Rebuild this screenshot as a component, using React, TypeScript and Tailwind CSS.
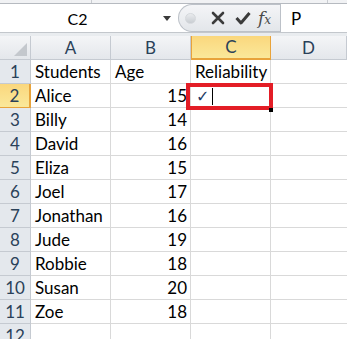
import React from "react";

const rows: [string, string][] = [
  ["Students", "Age"],
  ["Alice", "15"],
  ["Billy", "14"],
  ["David", "16"],
  ["Eliza", "15"],
  ["Joel", "17"],
  ["Jonathan", "16"],
  ["Jude", "19"],
  ["Robbie", "18"],
  ["Susan", "20"],
  ["Zoe", "18"],
  ["", ""],
];

const font = { fontFamily: "Lato, 'Open Sans', sans-serif" };

export default function App() {
  return (
    <div className="relative w-[347px] h-[339px] overflow-hidden bg-white" style={font}>
      {/* top strip */}
      <div className="h-[4px] bg-[#f1f2f4] border-b border-[#b6bac0] flex">
        <div className="w-[92px] border-r border-[#c9ccd1]" />
        <div className="w-[236px] border-r border-[#c9ccd1]" />
      </div>
      {/* formula bar */}
      <div className="h-[29px] flex bg-white border-b border-[#c3c7cc]">
        <div className="w-[178px] flex items-center relative">
          <div className="w-[155px] text-center text-[16px] text-black leading-none pt-[1px]">C2</div>
          <div className="absolute left-[163px] top-[12px] w-0 h-0 border-l-[4px] border-r-[4px] border-t-[5px] border-l-transparent border-r-transparent border-t-[#3a3a3a]" />
        </div>
        <div className="w-[102px] h-full flex items-center rounded-l-[14px] border border-r-0 border-[#bcc1c8] bg-gradient-to-b from-[#f4f5f7] to-[#e3e6ea]">
          <div className="ml-[6px] w-[11px] h-[11px] rounded-full bg-gradient-to-b from-[#e9ebee] to-[#c9cdd2] border border-[#d5d8dc]" />
          <svg className="ml-[15px]" width="14" height="14" viewBox="0 0 14 14">
            <path d="M2 2 L12 12 M12 2 L2 12" stroke="#3b3b3b" strokeWidth="2.6" strokeLinecap="round" />
          </svg>
          <svg className="ml-[10px]" width="16" height="14" viewBox="0 0 16 14">
            <path d="M1.5 7 L6 12 L14.5 2" stroke="#3b3b3b" strokeWidth="3" fill="none" strokeLinejoin="round" />
          </svg>
          <div className="ml-[7px] text-[17px] italic text-[#4a4a4a] leading-none" style={{ fontFamily: "'DejaVu Serif', 'Liberation Serif', serif" }}>
            f<span className="text-[12px]">x</span>
          </div>
        </div>
        <div className="flex-1 flex items-center border-l border-[#bcc1c8] pl-[10px] text-[17px] text-black leading-none">P</div>
      </div>
      {/* gap */}
      <div className="h-[3px] bg-[#e9ecef]" />
      {/* grid */}
      <div className="grid grid-cols-[31px_80px_80px_80px_1fr]">
        {/* header */}
        <div className="h-[24px] relative bg-gradient-to-b from-[#f4f5f7] to-[#e4e7eb] border-r border-b border-[#c5cad1]">
          <div className="absolute right-[3px] bottom-[3px] w-0 h-0 border-l-0 border-t-[13px] border-t-transparent border-b-0 border-r-[13px] border-r-[#c4c8cd]" />
        </div>
        {["A", "B", "C", "D"].map((c) => (
          <div
            key={c}
            className={
              c === "C"
                ? "h-[24px] flex items-center justify-center text-[17px] text-[#2a4159] bg-gradient-to-b from-[#fad77d] to-[#fae89a] border-l border-r border-b-2 border-[#e8a33b]"
                : "h-[24px] flex items-center justify-center text-[17px] text-[#2a4159] bg-gradient-to-b from-[#f4f5f7] to-[#e4e7eb] border-r border-b border-[#c5cad1]"
            }
          >
            {c}
          </div>
        ))}
        {rows.map(([a, b], i) => {
          const n = i + 1;
          const sel = n === 2;
          return (
            <React.Fragment key={n}>
              <div
                className={
                  sel
                    ? "h-[24px] flex items-center justify-center text-[17px] text-[#2a4159] bg-gradient-to-b from-[#fad77d] to-[#fae89a] border-r-2 border-b border-[#e8a33b]"
                    : "h-[24px] flex items-center justify-center text-[17px] text-[#2a4159] bg-[#e4e8ed] border-r border-b border-[#c5cad1]"
                }
              >
                {n}
              </div>
              <div className="h-[24px] flex items-center pl-[4px] text-[17px] text-black border-r border-b border-[#d9d9d9] whitespace-nowrap">
                {a}
              </div>
              <div
                className={
                  "h-[24px] flex items-center pr-[3px] text-[17px] text-black border-r border-b border-[#d9d9d9] whitespace-nowrap " +
                  (i === 0 ? "justify-start pl-[4px]" : "justify-end")
                }
              >
                {b}
              </div>
              <div className="h-[24px] flex items-center pl-[4px] text-[17px] text-black border-r border-b border-[#d9d9d9] whitespace-nowrap">
                {i === 0 ? "Reliability" : ""}
              </div>
              <div className="h-[24px] border-b border-[#d9d9d9]" />
            </React.Fragment>
          );
        })}
      </div>
      {/* selection overlay */}
      <div className="absolute left-[186px] top-[83px] w-[87px] h-[27px] border-[4px] border-[#e31d26] flex items-center">
        <span className="ml-[6px] text-[16px] text-[#1f3b66] leading-none" style={{ fontFamily: "'DejaVu Sans', sans-serif" }}>✓</span>
        <div className="ml-[3px] w-[1px] h-[17px] bg-black" />
      </div>
      <div className="absolute left-[269px] top-[108px] w-[4px] h-[4px] bg-black" />
    </div>
  );
}
